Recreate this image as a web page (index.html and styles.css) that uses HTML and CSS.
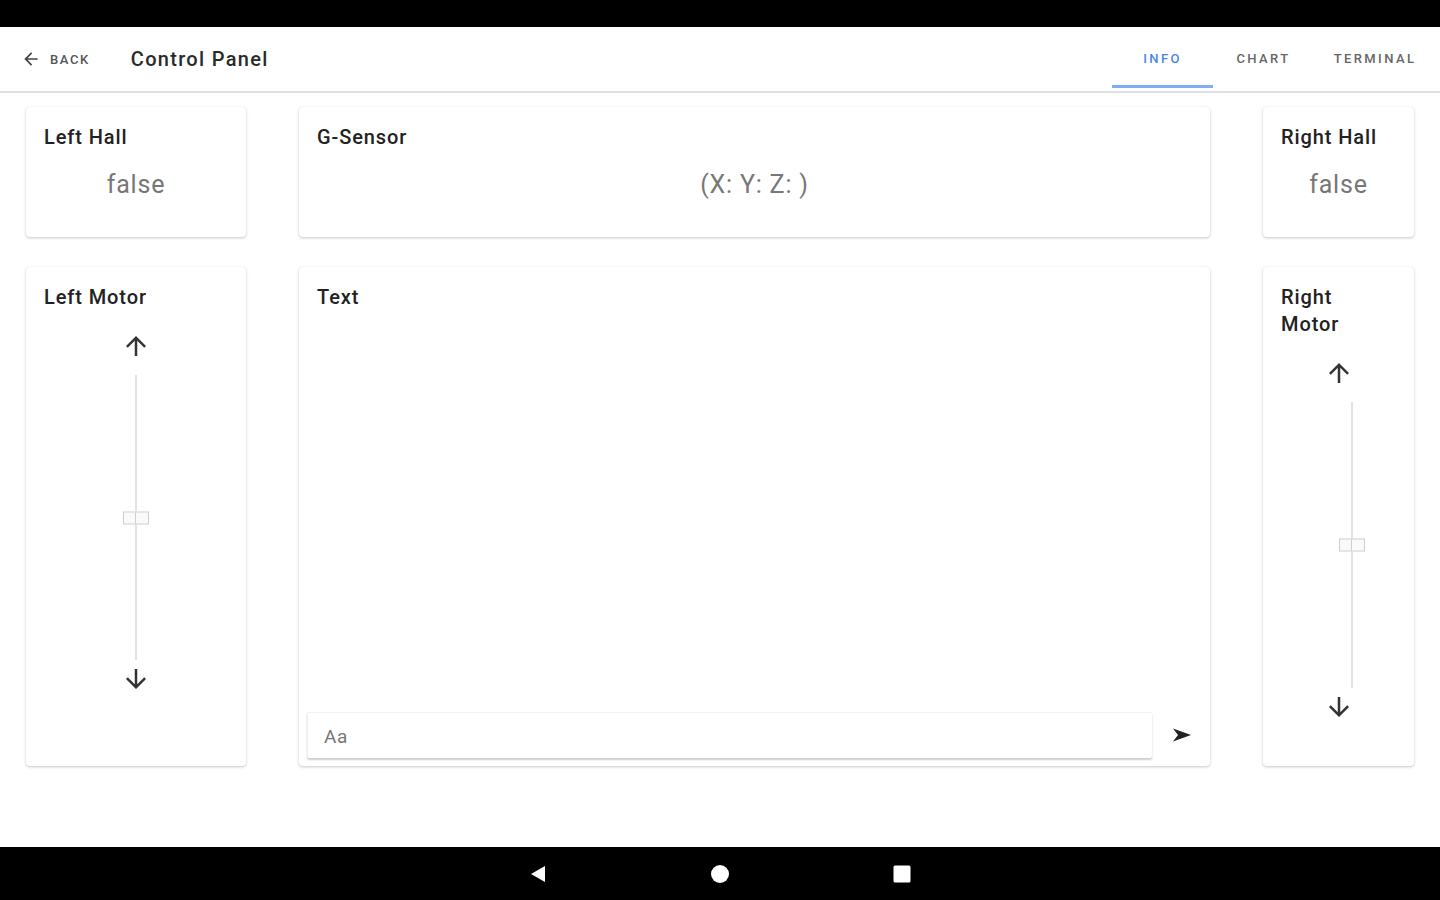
FILE: index.html
```html
<!DOCTYPE html>
<html lang="en">
<head>
    <meta charset="UTF-8">
    <meta name="viewport" content="width=device-width, initial-scale=1.0">
    <title>Control Panel</title>
    <link rel="stylesheet" href="styles.css">
</head>
<body>

<div class="status-bar"></div>

<header class="app-bar">
    <a class="back" href="#">
        <svg width="20" height="20" viewBox="0 0 24 24"><path d="M20 11H7.83l5.59-5.59L12 4l-8 8 8 8 1.41-1.41L7.83 13H20v-2z" fill="#444"/></svg>
        <span>BACK</span>
    </a>
    <h1 class="title">Control Panel</h1>
    <nav class="tabs">
        <a class="tab active" href="#">INFO</a>
        <a class="tab" href="#">CHART</a>
        <a class="tab" href="#">TERMINAL</a>
    </nav>
</header>

<main class="panel">
    <div class="card">
        <div class="card-title">Left Hall</div>
        <div class="value">false</div>
    </div>
    <div class="card">
        <div class="card-title">G-Sensor</div>
        <div class="value">(X: Y: Z: )</div>
    </div>
    <div class="card">
        <div class="card-title">Right Hall</div>
        <div class="value">false</div>
    </div>

    <div class="card motor">
        <div class="card-title">Left Motor</div>
        <div class="slider">
            <svg class="arrow" width="30" height="30" viewBox="0 0 24 24"><path d="M4 12l1.41 1.41L11 7.83V20h2V7.83l5.58 5.59L20 12l-8-8-8 8z" fill="#333"/></svg>
            <div class="track left-track"><span class="thumb"></span></div>
            <svg class="arrow" width="30" height="30" viewBox="0 0 24 24"><path d="M20 12l-1.41-1.41L13 16.17V4h-2v12.17l-5.58-5.59L4 12l8 8 8-8z" fill="#333"/></svg>
        </div>
    </div>
    <div class="card text-card">
        <div class="card-title">Text</div>
        <div class="composer">
            <input class="message" type="text" placeholder="Aa">
            <button class="send">
                <svg width="20" height="16" viewBox="0 0 20 16"><path d="M1 1.5L19 8 1 14.5 6 8z" fill="#222"/></svg>
            </button>
        </div>
    </div>
    <div class="card motor right-motor">
        <div class="card-title">Right Motor</div>
        <div class="slider">
            <svg class="arrow" width="30" height="30" viewBox="0 0 24 24"><path d="M4 12l1.41 1.41L11 7.83V20h2V7.83l5.58 5.59L20 12l-8-8-8 8z" fill="#333"/></svg>
            <div class="track right-track"><span class="thumb"></span></div>
            <svg class="arrow" width="30" height="30" viewBox="0 0 24 24"><path d="M20 12l-1.41-1.41L13 16.17V4h-2v12.17l-5.58-5.59L4 12l8 8 8-8z" fill="#333"/></svg>
        </div>
    </div>
</main>

<footer class="nav-bar">
    <svg width="20" height="20" viewBox="0 0 20 20"><path d="M17 2v16L3 10z" fill="#fff"/></svg>
    <svg width="20" height="20" viewBox="0 0 20 20"><circle cx="10" cy="10" r="9" fill="#fff"/></svg>
    <svg width="20" height="20" viewBox="0 0 20 20"><rect x="1.5" y="1.5" width="17" height="17" rx="1.5" fill="#fff"/></svg>
</footer>

</body>
</html>
```

FILE: styles.css
```css
body {
    font-family: Roboto, "Noto Sans", Arial, sans-serif;
    background-color: #fff;
    margin: 0;
    padding: 0;
    height: 900px;
    display: flex;
    flex-direction: column;
    overflow: hidden;
}
.status-bar {
    height: 27px;
    background-color: #000;
}
.app-bar {
    height: 64px;
    display: flex;
    align-items: center;
    border-bottom: 2px solid #dedede;
}
.back {
    display: flex;
    align-items: center;
    gap: 9px;
    margin-left: 21px;
    color: #555;
    text-decoration: none;
    font-size: 13px;
    font-weight: 500;
    letter-spacing: 1.6px;
}
.title {
    margin: 0 0 0 41px;
    font-size: 20px;
    font-weight: 500;
    letter-spacing: 1.3px;
    color: #2a2a2a;
}
.tabs {
    margin-left: auto;
    margin-right: 4px;
    display: flex;
    align-self: stretch;
}
.tab {
    width: 101px;
    display: flex;
    align-items: center;
    justify-content: center;
    font-size: 13px;
    font-weight: 500;
    letter-spacing: 2.4px;
    color: #666;
    text-decoration: none;
    border-bottom: 3px solid transparent;
    padding-top: 4px;
    margin-bottom: 3px;
}
.tab:last-child {
    width: 122px;
}
.tab.active {
    color: #4a86ee;
    border-bottom-color: #82adf5;
}
.panel {
    flex: 1;
    display: grid;
    grid-template-columns: 220px 911px 151px;
    grid-template-rows: 130px 499px;
    column-gap: 53px;
    row-gap: 30px;
    padding: 14px 0 0 26px;
    align-content: start;
}
.card {
    background-color: #fff;
    border-radius: 4px;
    box-shadow: 0 1px 3px rgba(0, 0, 0, 0.22), 0 0 1px rgba(0, 0, 0, 0.06);
    padding: 17px 18px 16px;
    box-sizing: border-box;
    display: flex;
    flex-direction: column;
}
.card-title {
    font-size: 20px;
    font-weight: 500;
    line-height: 27px;
    letter-spacing: 0.9px;
    color: #222;
}
.value {
    margin-top: 19px;
    text-align: center;
    font-size: 25px;
    letter-spacing: 0.8px;
    color: #777;
}
.slider {
    flex: 1;
    display: flex;
    flex-direction: column;
    align-items: center;
    padding-top: 20px;
}
.arrow {
    display: block;
}
.track {
    position: relative;
    width: 2px;
    background-color: #e2e2e2;
    margin: 14px 0 4px;
}
.left-track {
    height: 285px;
}
.right-motor .card-title {
    padding-right: 20px;
}
.right-track {
    height: 286px;
    margin-left: 26px;
}
.thumb {
    position: absolute;
    left: 50%;
    top: 50%;
    width: 24px;
    height: 11px;
    transform: translate(-50%, -50%);
    border: 1px solid #cfcfcf;
    background: linear-gradient(to right, transparent 11px, #cfcfcf 11px, #cfcfcf 12px, transparent 12px), #fafafa;
}
.text-card {
    padding-bottom: 8px;
}
.composer {
    margin-top: auto;
    margin-left: -10px;
    display: flex;
    align-items: center;
}
.message {
    width: 847px;
    height: 46px;
    box-sizing: border-box;
    border: none;
    border-left: 1px solid #eee;
    border-top: 1px solid #f2f2f2;
    border-radius: 2px;
    box-shadow: 0 2px 2px rgba(0, 0, 0, 0.2);
    padding: 2px 16px 0;
    font-family: Roboto, sans-serif;
    font-size: 19px;
    letter-spacing: 0.5px;
    outline: none;
}
.message::placeholder {
    color: #777;
}
.send {
    margin-left: 20px;
    border: none;
    background: none;
    padding: 0;
    display: flex;
}
.nav-bar {
    height: 53px;
    background-color: #000;
    display: flex;
    align-items: center;
    justify-content: center;
    gap: 162px;
}
```
